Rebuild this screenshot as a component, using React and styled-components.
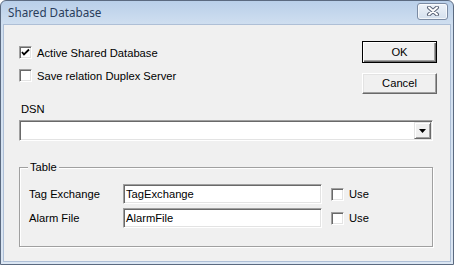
import React from 'react';
import styled, { createGlobalStyle } from 'styled-components';

const GlobalStyle = createGlobalStyle`
    html, body {
        margin: 0;
        padding: 0;
        background: #ffffff;
    }
    * {
        box-sizing: border-box;
    }
`;

const Window = styled.div`
    width: 454px;
    height: 265px;
    display: flex;
    flex-direction: column;
    border: 1px solid #5b6a80;
    border-radius: 6px 6px 0 0;
    background: linear-gradient(#b9cfe9 0px, #d0dff0 24px, #dbe6f3 100%);
    padding: 0 2px 2px 2px;
    font-family: "Liberation Sans", Arial, sans-serif;
    font-size: 11.2px;
    color: #000;
`;

const TitleBar = styled.div`
    height: 23px;
    display: flex;
    align-items: center;
    justify-content: space-between;
    padding: 0 3px 0 5px;
`;

const Title = styled.span`
    font-family: "Noto Sans", sans-serif;
    font-size: 11.7px;
    color: #2a3d5c;
    margin-top: -2px;
`;

const CloseButton = styled.div`
    width: 31px;
    height: 17px;
    margin-top: -3px;
    border: 1px solid #7b8ba3;
    border-radius: 3px;
    background: linear-gradient(#eef3f9, #d4e0ee);
    box-shadow: inset 0 0 0 1px rgba(255, 255, 255, 0.7);
    display: flex;
    align-items: center;
    justify-content: center;
`;

const Client = styled.div`
    flex: 1;
    background: #f0f0f0;
    border: 1px solid #aebfd6;
    padding: 16px 17px 0 15px;
    display: flex;
    flex-direction: column;
`;

const TopRow = styled.div`
    display: flex;
    justify-content: space-between;
    height: 53px;
`;

const Checks = styled.div`
    display: flex;
    flex-direction: column;
    gap: 10px;
    padding-top: 5px;
`;

const CheckRow = styled.label`
    display: flex;
    align-items: center;
    gap: 5px;
    height: 13px;
    white-space: nowrap;
`;

const Box = styled.span`
    width: 13px;
    height: 13px;
    flex: none;
    background: #fff;
    border-style: solid;
    border-width: 1px;
    border-color: #a0a0a0 #ffffff #ffffff #a0a0a0;
    box-shadow: inset 1px 1px 0 #696969, inset -1px -1px 0 #e3e3e3;
    display: flex;
    align-items: center;
    justify-content: center;
`;

const Buttons = styled.div`
    display: flex;
    flex-direction: column;
    gap: 10px;
    margin-right: -4px;
`;

const Button = styled.div`
    width: 75px;
    height: 22px;
    display: flex;
    align-items: center;
    justify-content: center;
    background: #f0f0f0;
    border: 1px solid ${p => (p.$default ? '#000' : '#fff')};
    border-right-color: ${p => (p.$default ? '#000' : '#696969')};
    border-bottom-color: ${p => (p.$default ? '#000' : '#696969')};
    box-shadow: ${p => (p.$default
        ? 'inset 1px 1px 0 #fff, inset -1px -1px 0 #696969, inset -2px -2px 0 #a0a0a0'
        : 'inset -1px -1px 0 #a0a0a0, inset 1px 1px 0 #e3e3e3')};
`;

const FieldLabel = styled.div`
    margin-top: 9px;
    height: 13px;
    line-height: 13px;
    padding-left: 2px;
`;

const Combo = styled.div`
    margin-top: 4px;
    height: 21px;
    display: flex;
    justify-content: flex-end;
    background: #fff;
    border-style: solid;
    border-width: 1px;
    border-color: #a0a0a0 #ffffff #ffffff #a0a0a0;
    box-shadow: inset 1px 1px 0 #696969, inset -1px -1px 0 #e3e3e3;
    padding: 1px;
`;

const ComboButton = styled.div`
    width: 17px;
    height: 17px;
    background: #f0f0f0;
    border-style: solid;
    border-width: 1px;
    border-color: #e3e3e3 #696969 #696969 #e3e3e3;
    box-shadow: inset 1px 1px 0 #fff, inset -1px -1px 0 #a0a0a0;
    display: flex;
    align-items: center;
    justify-content: center;
`;

const Group = styled.div`
    position: relative;
    margin-top: 26px;
    height: 80px;
    border: 1px solid #a0a0a0;
    box-shadow: inset 1px 1px 0 #fff, 1px 1px 0 #fff;
    padding: 16px 0 0 9px;
    display: flex;
    flex-direction: column;
    gap: 4px;
`;

const Legend = styled.span`
    position: absolute;
    top: -7px;
    left: 8px;
    padding: 0 2px;
    line-height: 13px;
    background: #f0f0f0;
`;

const Row = styled.div`
    display: flex;
    align-items: center;
    height: 20px;
`;

const RowLabel = styled.span`
    width: 94px;
    flex: none;
`;

const TextBox = styled.div`
    width: 199px;
    height: 20px;
    background: #fff;
    border-style: solid;
    border-width: 1px;
    border-color: #a0a0a0 #ffffff #ffffff #a0a0a0;
    box-shadow: inset 1px 1px 0 #696969, inset -1px -1px 0 #e3e3e3;
    padding: 0 2px;
    line-height: 18px;
    margin-right: 9px;
`;

function CheckBox({ checked, children }) {
    return (
        <CheckRow>
            <Box>
                {checked && (
                    <svg width="9" height="9" viewBox="0 0 9 9">
                        <path d="M1 4 L3 6.5 L8 1.5" fill="none" stroke="#000" strokeWidth="1.8" />
                    </svg>
                )}
            </Box>
            {children}
        </CheckRow>
    );
}

function App() {
    return (
        <>
            <GlobalStyle />
            <Window>
                <TitleBar>
                    <Title>Shared Database</Title>
                    <CloseButton>
                        <svg width="14" height="10" viewBox="0 0 14 10">
                            <path d="M3 1.5 L11 8.5 M11 1.5 L3 8.5" stroke="#5a6478" strokeWidth="4" strokeLinecap="round" />
                            <path d="M3 1.5 L11 8.5 M11 1.5 L3 8.5" stroke="#fff" strokeWidth="2" strokeLinecap="round" />
                        </svg>
                    </CloseButton>
                </TitleBar>
                <Client>
                    <TopRow>
                        <Checks>
                            <CheckBox checked>Active Shared Database</CheckBox>
                            <CheckBox>Save relation Duplex Server</CheckBox>
                        </Checks>
                        <Buttons>
                            <Button $default>OK</Button>
                            <Button>Cancel</Button>
                        </Buttons>
                    </TopRow>
                    <FieldLabel>DSN</FieldLabel>
                    <Combo>
                        <ComboButton>
                            <svg width="7" height="4" viewBox="0 0 7 4">
                                <path d="M0 0 H7 L3.5 4 Z" fill="#000" />
                            </svg>
                        </ComboButton>
                    </Combo>
                    <Group>
                        <Legend>Table</Legend>
                        <Row>
                            <RowLabel>Tag Exchange</RowLabel>
                            <TextBox>TagExchange</TextBox>
                            <CheckBox>Use</CheckBox>
                        </Row>
                        <Row>
                            <RowLabel>Alarm File</RowLabel>
                            <TextBox>AlarmFile</TextBox>
                            <CheckBox>Use</CheckBox>
                        </Row>
                    </Group>
                </Client>
            </Window>
        </>
    );
}

export default App;
